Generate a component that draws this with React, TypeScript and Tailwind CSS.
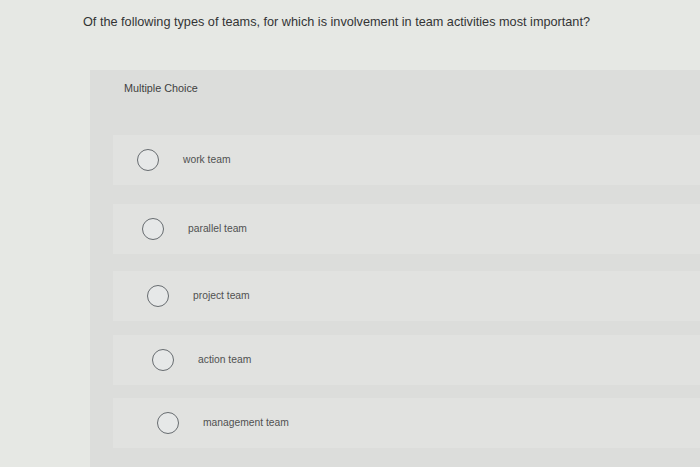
const options = [
  { label: 'work team', row: 'mt-[41px]', indent: 'ml-[24px]' },
  { label: 'parallel team', row: 'mt-[19px]', indent: 'ml-[29px]' },
  { label: 'project team', row: 'mt-[17px]', indent: 'ml-[34px]' },
  { label: 'action team', row: 'mt-[14px]', indent: 'ml-[39px]' },
  { label: 'management team', row: 'mt-[13px]', indent: 'ml-[44px]' },
];

export default function App() {
  return (
    <div
      className="flex h-[467px] w-[700px] flex-col overflow-hidden bg-[#e6e8e4] text-[#333]"
      style={{ fontFamily: '"Liberation Sans", Arial, sans-serif' }}
    >
      <h1 className="h-[70px] shrink-0 pt-[13px] pl-[83px] text-[12.7px] font-normal text-[#333434]">
        Of the following types of teams, for which is involvement in team activities most important?
      </h1>
      <section className="ml-[90px] flex flex-1 flex-col bg-[#dcdddb] pl-[23px]">
        <p className="mt-[12px] ml-[11px] text-[10.8px] leading-[12px] text-[#3e3f3f]">
          Multiple Choice
        </p>
        <ul className="flex flex-col">
          {options.map(({ label, row, indent }) => (
            <li
              key={label}
              className={`flex h-[50px] items-center bg-[#e1e2e0] ${row}`}
            >
              <span
                className={`size-[22px] shrink-0 rounded-full border-[1.5px] border-[#676c70] bg-[#e6e8e8] ${indent}`}
              />
              <span className="ml-[24px] text-[10.3px] text-[#505151]">{label}</span>
            </li>
          ))}
        </ul>
      </section>
    </div>
  );
}
